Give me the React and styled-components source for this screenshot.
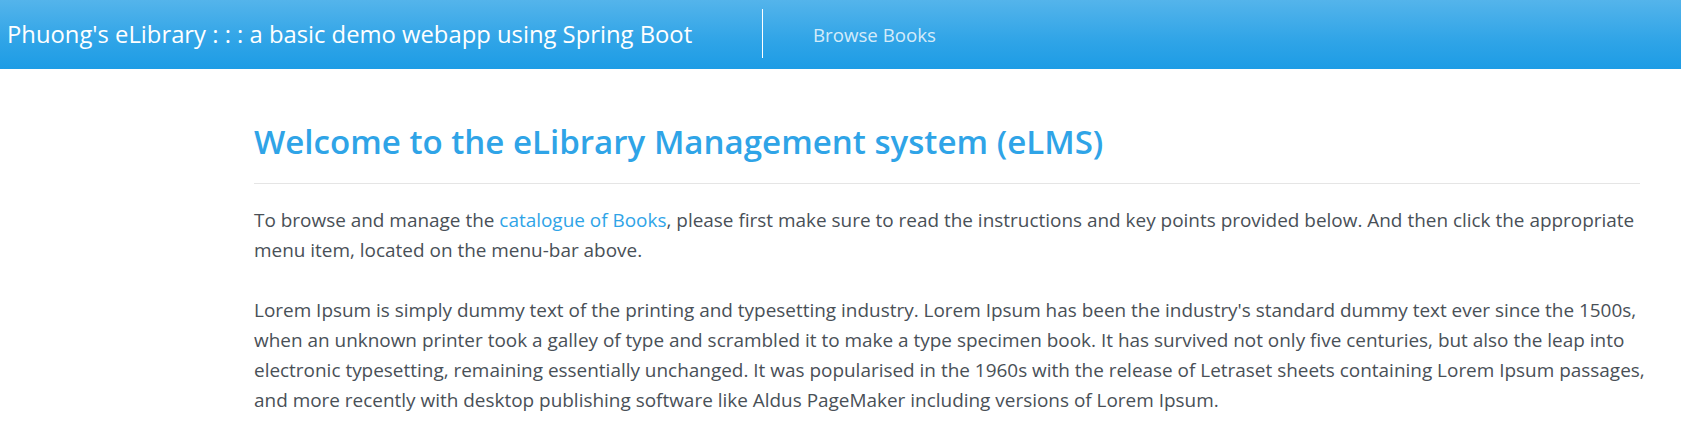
import React from 'react';
import styled, { createGlobalStyle } from 'styled-components';

const GlobalStyle = createGlobalStyle`
  body {
    margin: 0;
    background: #ffffff;
    font-family: "Open Sans", "Noto Sans", sans-serif;
    color: #495057;
  }
`;

const Navbar = styled.nav`
  display: flex;
  align-items: center;
  height: 69px;
  background-image: linear-gradient(#54b4eb, #2fa4e7 60%, #1d9ce5);
`;

const BrandBox = styled.div`
  display: flex;
  align-items: center;
  box-sizing: border-box;
  width: 763px;
  height: 49px;
  margin: 9px 0 11px;
  padding-left: 7px;
  border-right: 1px solid #ffffff;
`;

const Brand = styled.a`
  font-size: 23.8px;
  color: #ffffff;
  text-decoration: none;
  white-space: nowrap;
`;

const NavLink = styled.a`
  margin-left: 50px;
  font-size: 18.7px;
  color: rgba(255, 255, 255, 0.8);
  text-decoration: none;
`;

const Main = styled.main`
  width: 1386px;
  margin-left: 254px;
  padding-top: 51px;
`;

const Title = styled.h1`
  margin: 0 0 19px;
  font-size: 33.1px;
  line-height: 44px;
  font-weight: 600;
  color: #2fa4e7;
`;

const Rule = styled.hr`
  margin: 0 0 21px;
  border: 0;
  border-top: 1px solid #e5e5e5;
`;

const Text = styled.p`
  margin: 0 -20px 30px 0;
  font-size: 18.95px;
  line-height: 30px;
`;

const Link = styled.a`
  color: #2fa4e7;
  text-decoration: none;
`;

export default function App() {
  return (
    <>
      <GlobalStyle />
      <Navbar>
        <BrandBox>
          <Brand href="#">Phuong's eLibrary : : : a basic demo webapp using Spring Boot</Brand>
        </BrandBox>
        <NavLink href="#">Browse Books</NavLink>
      </Navbar>
      <Main>
        <Title>Welcome to the eLibrary Management system (eLMS)</Title>
        <Rule />
        <Text>
          To browse and manage the <Link href="#">catalogue of Books</Link>, please first make sure to read the
          instructions and key points provided below. And then click the appropriate
          <br />
          menu item, located on the menu-bar above.
        </Text>
        <Text>
          Lorem Ipsum is simply dummy text of the printing and typesetting industry. Lorem Ipsum has been the
          industry's standard dummy text ever since the 1500s, when an unknown printer took a galley of type and
          scrambled it to make a type specimen book. It has survived not only five centuries, but also the leap into
          electronic typesetting, remaining essentially unchanged. It was popularised in the 1960s with the release of
          Letraset sheets containing Lorem Ipsum passages, and more recently with desktop publishing software like
          Aldus PageMaker including versions of Lorem Ipsum.
        </Text>
      </Main>
    </>
  );
}
